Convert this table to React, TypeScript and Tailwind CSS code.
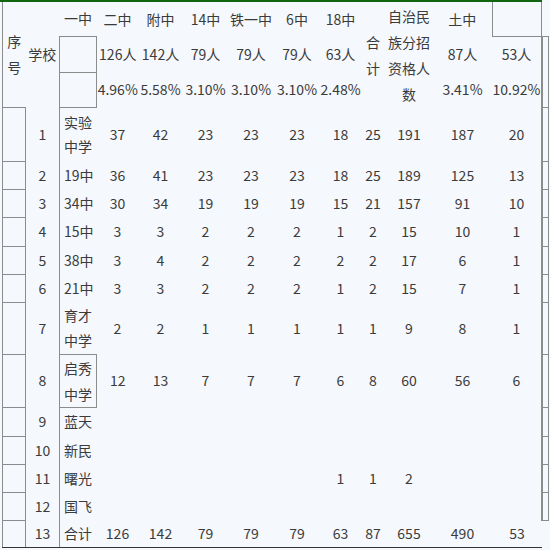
const line = 'border-[#8c8c8c]'

type Row = {
  n: string
  school: string[]
  v: string[]
  h: string
  lead?: string
  boxed?: boolean
  last?: boolean
}

const empty = ['', '', '', '', '', '', '', '', '', '']

const rows: Row[] = [
  { n: '1', school: ['实验', '中学'], v: ['37', '42', '23', '23', '23', '18', '25', '191', '187', '20'], h: 'h-[54px]', lead: 'leading-[24px]' },
  { n: '2', school: ['19中'], v: ['36', '41', '23', '23', '23', '18', '25', '189', '125', '13'], h: 'h-[28px]' },
  { n: '3', school: ['34中'], v: ['30', '34', '19', '19', '19', '15', '21', '157', '91', '10'], h: 'h-[28px]' },
  { n: '4', school: ['15中'], v: ['3', '3', '2', '2', '2', '1', '2', '15', '10', '1'], h: 'h-[29px]' },
  { n: '5', school: ['38中'], v: ['3', '4', '2', '2', '2', '2', '2', '17', '6', '1'], h: 'h-[28px]' },
  { n: '6', school: ['21中'], v: ['3', '3', '2', '2', '2', '1', '2', '15', '7', '1'], h: 'h-[28px]' },
  { n: '7', school: ['育才', '中学'], v: ['2', '2', '1', '1', '1', '1', '1', '9', '8', '1'], h: 'h-[52px]', lead: 'leading-[25px]' },
  { n: '8', school: ['启秀', '中学'], v: ['12', '13', '7', '7', '7', '6', '8', '60', '56', '6'], h: 'h-[53px]', lead: 'leading-[26px]', boxed: true },
  { n: '9', school: ['蓝天'], v: empty, h: 'h-[29px]' },
  { n: '10', school: ['新民'], v: empty, h: 'h-[28px]' },
  { n: '11', school: ['曙光'], v: ['', '', '', '', '', '1', '1', '2', '', ''], h: 'h-[28px]' },
  { n: '12', school: ['国飞'], v: empty, h: 'h-[28px]' },
  { n: '13', school: ['合计'], v: ['126', '142', '79', '79', '79', '63', '87', '655', '490', '53'], h: 'h-[27px]', last: true },
]

export default function App() {
  return (
    <div className="w-[550px] h-[550px] overflow-hidden bg-[#f5f8fc] text-[#3b3b3b] text-[14px] font-['Noto_Sans_CJK_SC','Noto_Sans',sans-serif]">
      <div className="w-[542px] border-t-2 border-[#11650f]">
        <table className="ml-[2px] w-[546px] table-fixed border-collapse">
          <colgroup>
            <col className="w-[23px]" />
            <col className="w-[34px]" />
            <col className="w-[37px]" />
            <col className="w-[42px]" />
            <col className="w-[44px]" />
            <col className="w-[46px]" />
            <col className="w-[45px]" />
            <col className="w-[47px]" />
            <col className="w-[40px]" />
            <col className="w-[25px]" />
            <col className="w-[47px]" />
            <col className="w-[60px]" />
            <col className="w-[49px]" />
            <col className="w-[7px]" />
          </colgroup>
          <tbody>
            <tr className="h-[34px]">
              <td rowSpan={3} className={`p-0 text-center leading-[26px] border-l ${line}`}>序号</td>
              <td rowSpan={3} className="p-0 text-center">学校</td>
              <td className="p-0 text-center">一中</td>
              <td className="p-0 text-center">二中</td>
              <td className="p-0 text-center">附中</td>
              <td className="p-0 text-center">14中</td>
              <td className="p-0 text-center">铁一中</td>
              <td className="p-0 text-center">6中</td>
              <td className="p-0 text-center">18中</td>
              <td rowSpan={3} className="p-0 text-center leading-[26px]">合计</td>
              <td rowSpan={3} className="p-0 text-center leading-[26px]">自治民族分招资格人数</td>
              <td className="p-0 text-center">土中</td>
              <td className={`p-0 border-l border-r border-b ${line}`}></td>
              <td className="p-0"></td>
            </tr>
            <tr className="h-[36px]">
              <td className={`p-0 border ${line}`}></td>
              <td className="p-0 text-center">126人</td>
              <td className="p-0 text-center">142人</td>
              <td className="p-0 text-center">79人</td>
              <td className="p-0 text-center">79人</td>
              <td className="p-0 text-center">79人</td>
              <td className="p-0 text-center">63人</td>
              <td className="p-0 text-center">87人</td>
              <td className="p-0 text-center">53人</td>
              <td rowSpan={2} className={`p-0 border border-l-2 ${line}`}></td>
            </tr>
            <tr className="h-[35px]">
              <td className={`p-0 border ${line}`}></td>
              <td className="p-0 text-center">4.96%</td>
              <td className="p-0 text-center">5.58%</td>
              <td className="p-0 text-center">3.10%</td>
              <td className="p-0 text-center">3.10%</td>
              <td className="p-0 text-center">3.10%</td>
              <td className="p-0 text-center">2.48%</td>
              <td className="p-0 text-center">3.41%</td>
              <td className="p-0 text-center">10.92%</td>
            </tr>
            {rows.map((r) => {
              const bottom = r.last ? 'border-b border-b-[#333]' : ''
              return (
                <tr key={r.n} className={r.h}>
                  <td className={`p-0 border ${line} ${bottom}`}></td>
                  <td className={`p-0 text-center ${bottom}`}>{r.n}</td>
                  <td
                    className={`p-0 pl-[4px] text-left ${r.lead ?? ''} ${line} ${
                      r.boxed ? 'border' : 'border-l'
                    } ${bottom}`}
                  >
                    {r.school.map((s) => (
                      <div key={s}>{s}</div>
                    ))}
                  </td>
                  {r.v.map((v, i) => (
                    <td key={i} className={`p-0 text-center ${bottom}`}>
                      {v}
                    </td>
                  ))}
                  <td className={r.last ? 'p-0' : `p-0 border border-l-2 ${line}`}></td>
                </tr>
              )
            })}
          </tbody>
        </table>
      </div>
    </div>
  )
}
